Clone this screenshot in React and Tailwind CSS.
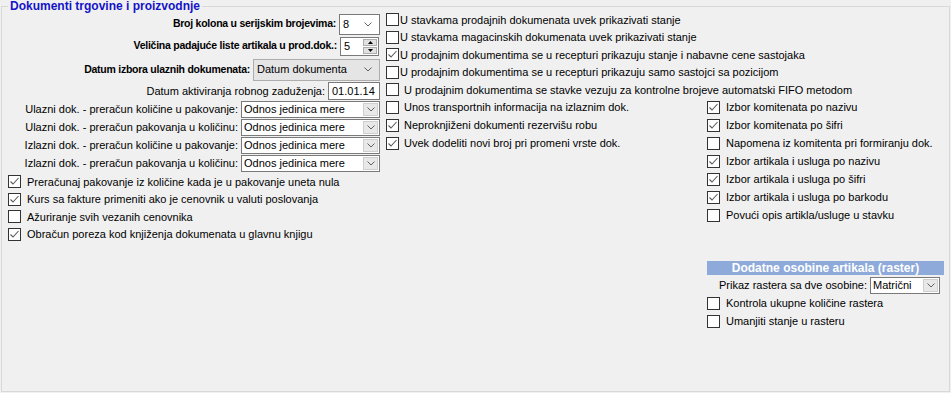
import React from 'react';

const FONT = { fontFamily: '"Liberation Sans", Arial, sans-serif' };

function Chevron() {
  return (
    <svg width="8" height="5" viewBox="0 0 8 5" className="block">
      <polyline points="0.5,0.5 4,4 7.5,0.5" fill="none" stroke="#606060" strokeWidth="1" />
    </svg>
  );
}

function Check({ checked, label, gap = 'gap-[6px]' }) {
  return (
    <label className={`flex items-center ${gap} whitespace-nowrap`}>
      <span className="flex h-[13px] w-[13px] shrink-0 items-center justify-center border border-[#333] bg-white">
        {checked && (
          <svg width="11" height="11" viewBox="0 0 11 11">
            <polyline points="1.5,5.5 4,8 9.5,2" fill="none" stroke="#5a5a5a" strokeWidth="1.1" />
          </svg>
        )}
      </span>
      <span>{label}</span>
    </label>
  );
}

// white combo with grey drop button
function Combo({ value, width, height = 'h-[17px]' }) {
  return (
    <div className={`flex ${height} ${width} shrink-0 items-stretch border border-[#7a7a7a] bg-white`}>
      <span className="flex-1 overflow-hidden pl-[2px] leading-[15px]">{value}</span>
      <span className="m-[1px] flex w-[15px] items-end justify-center border border-[#cfcfcf] bg-[#e8e8e8] pb-[3px]">
        <Chevron />
      </span>
    </div>
  );
}

function Row({ label, children, h, bold }) {
  return (
    <div className={`flex ${h} items-center justify-end gap-[3px] whitespace-nowrap`}>
      <span className={bold ? 'text-[10.5px] font-bold tracking-[-0.25px]' : ''}>{label}</span>
      {children}
    </div>
  );
}

const leftCombos = [
  'Ulazni dok. - preračun količine u pakovanje:',
  'Ulazni dok. - preračun pakovanja u količinu:',
  'Izlazni dok. - preračun količine u pakovanje:',
  'Izlazni dok. - preračun pakovanja u količinu:',
];

const leftChecks = [
  ['Preračunaj pakovanje iz količine kada je u pakovanje uneta nula', true],
  ['Kurs sa fakture primeniti ako je cenovnik u valuti poslovanja', true],
  ['Ažuriranje svih vezanih cenovnika', false],
  ['Obračun poreza kod knjiženja dokumenata u glavnu knjigu', true],
];

const topChecks = [
  ['U stavkama prodajnih dokumenata uvek prikazivati stanje', false],
  ['U stavkama magacinskih dokumenata uvek prikazivati stanje', false],
  ['U prodajnim dokumentima se u recepturi prikazuju stanje i nabavne cene sastojaka', true],
  ['U prodajnim dokumentima se u recepturi prikazuju samo sastojci sa pozicijom', false],
];

const midChecks = [
  ['Unos transportnih informacija na izlaznim dok.', false],
  ['Neproknjiženi dokumenti rezervišu robu', true],
  ['Uvek dodeliti novi broj pri promeni vrste dok.', true],
];

const rightChecks = [
  ['Izbor komitenata po nazivu', true],
  ['Izbor komitenata po šifri', true],
  ['Napomena iz komitenta pri formiranju dok.', false],
  ['Izbor artikala i usluga po nazivu', true],
  ['Izbor artikala i usluga po šifri', true],
  ['Izbor artikala i usluga po barkodu', true],
  ['Povući opis artikla/usluge u stavku', false],
];

export default function App() {
  return (
    <div style={FONT} className="h-[393px] w-[951px] overflow-hidden bg-[#f0f0f0] text-[11px] text-black">
      <fieldset className="ml-[1px] h-[392px] w-[949px] border border-[#d8d8d8] pl-[6px]">
        <legend className="px-[2px] text-[12px] font-bold leading-[13px] text-[#1414c8]">
          Dokumenti trgovine i proizvodnje
        </legend>

        <div className="flex">
          {/* left column */}
          <div className="flex w-[372px] flex-col">
            <Row label="Broj kolona u serijskim brojevima:" h="h-[22px]" bold>
              <div className="flex h-[21px] w-[41px] items-center justify-between border border-[#7a7a7a] bg-white pl-[3px] pr-[7px]">
                <span>8</span>
                <Chevron />
              </div>
            </Row>
            <Row label="Veličina padajuće liste artikala u prod.dok.:" h="h-[22px]" bold>
              <div className="mr-[1px] flex h-[19px] w-[39px] items-stretch border border-[#7a7a7a] bg-white">
                <span className="flex-1 pl-[3px] leading-[17px]">5</span>
                <span className="m-[1px] flex w-[14px] flex-col gap-[1px]">
                  <span className="flex flex-1 items-center justify-center border border-[#adadad] bg-[#e1e1e1]">
                    <svg width="5" height="3" viewBox="0 0 5 3"><polygon points="2.5,0 5,3 0,3" fill="#000" /></svg>
                  </span>
                  <span className="flex flex-1 items-center justify-center border border-[#adadad] bg-[#e1e1e1]">
                    <svg width="5" height="3" viewBox="0 0 5 3"><polygon points="0,0 5,0 2.5,3" fill="#000" /></svg>
                  </span>
                </span>
              </div>
            </Row>
            <Row label="Datum izbora ulaznih dokumenata:" h="h-[25px]" bold>
              <div className="flex h-[22px] w-[127px] items-center justify-between border border-[#adadad] bg-[#e5e5e5] pl-[3px] pr-[7px]">
                <span>Datum dokumenta</span>
                <Chevron />
              </div>
            </Row>
            <Row label="Datum aktiviranja robnog zaduženja:" h="h-[18px]">
              <div className="flex h-[18px] w-[52px] items-center border border-[#7a7a7a] bg-white pl-[3px]">01.01.14</div>
            </Row>
            {leftCombos.map((l) => (
              <Row key={l} label={l} h="h-[18px]">
                <Combo value="Odnos jedinica mere" width="w-[139px]" />
              </Row>
            ))}
            <div className="mt-[1px] flex flex-col">
              {leftChecks.map(([l, c]) => (
                <div key={l} className="flex h-[17.5px] items-center">
                  <Check label={l} checked={c} />
                </div>
              ))}
            </div>
          </div>

          {/* right area */}
          <div className="-mt-[2px] ml-[6px] flex flex-1 flex-col">
            {topChecks.map(([l, c]) => (
              <div key={l} className="flex h-[17.5px] items-center">
                <Check label={l} checked={c} gap="gap-[1px]" />
              </div>
            ))}
            <div className="flex h-[17.5px] items-center">
              <Check label="U prodajnim dokumentima se stavke vezuju za kontrolne brojeve automatski FIFO metodom" gap="gap-[5px]" />
            </div>

            <div className="flex">
              <div className="flex w-[321px] flex-col">
                {midChecks.map(([l, c]) => (
                  <div key={l} className="flex h-[18px] items-center">
                    <Check label={l} checked={c} gap="gap-[5px]" />
                  </div>
                ))}
              </div>
              <div className="flex w-[237px] flex-col">
                {rightChecks.map(([l, c]) => (
                  <div key={l} className="flex h-[18px] items-center">
                    <Check label={l} checked={c} />
                  </div>
                ))}

                <div className="mt-[36px] flex h-[14px] items-center justify-center bg-[#8eaadb] text-[12px] font-bold text-white">
                  Dodatne osobine artikala (raster)
                </div>
                <div className="mt-[2px] flex h-[18px] items-center justify-end gap-[3px] whitespace-nowrap pr-[4px]">
                  <span>Prikaz rastera sa dve osobine:</span>
                  <Combo value="Matrični" width="w-[70px]" />
                </div>
                <div className="flex h-[18px] items-center">
                  <Check label="Kontrola ukupne količine rastera" />
                </div>
                <div className="flex h-[18px] items-center">
                  <Check label="Umanjiti stanje u rasteru" />
                </div>
              </div>
            </div>
          </div>
        </div>
      </fieldset>
    </div>
  );
}
